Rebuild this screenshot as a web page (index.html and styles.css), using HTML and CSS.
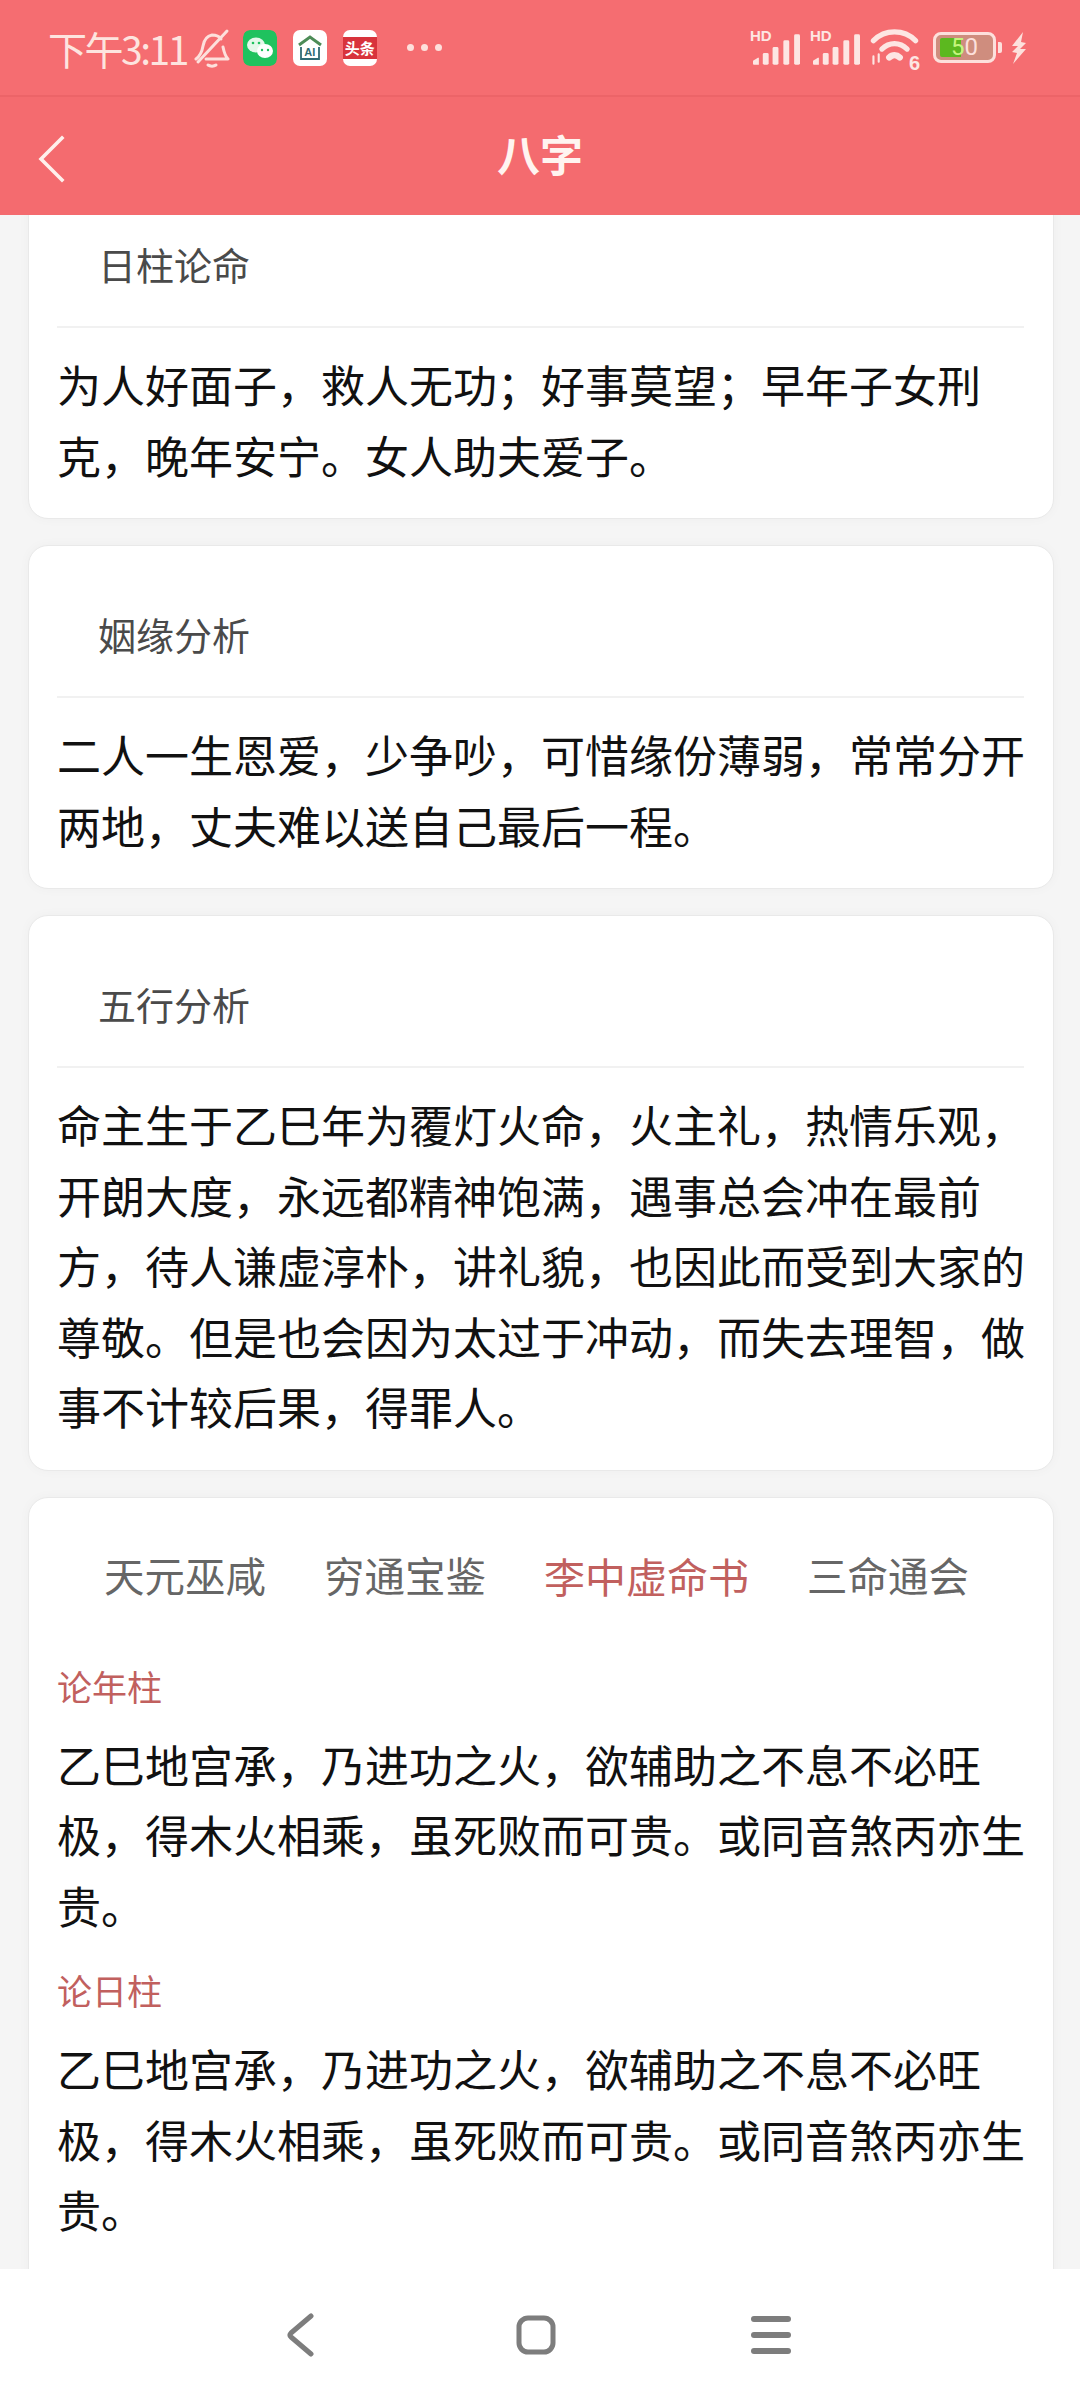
FILE: index.html
```html
<!DOCTYPE html>
<html lang="zh-CN">
<head>
    <meta charset="UTF-8">
    <meta name="viewport" content="width=device-width, initial-scale=1.0">
    <title>八字</title>
    <link rel="stylesheet" href="styles.css">
</head>
<body>
<div class="phone">
    <div class="status-bar">
        <div class="status-left">
            <span class="clock">下午3:11</span>
            <svg class="bell" viewBox="0 0 36 40" fill="none" stroke="#fde0dc" stroke-width="3" stroke-linecap="round" stroke-linejoin="round">
                <path d="M2 31c4-3 6-7 7-13 1-6 4-10 9-11 4 0 7 1 9 4"/>
                <path d="M29 19c1 5 2 9 5 12H12"/>
                <path d="M4 34 33 3"/>
                <path d="M14 37c2 1.500 6 1.500 8 0"/>
            </svg>
            <svg class="app-icon wechat" viewBox="0 0 34 36">
                <rect width="34" height="36" rx="7" fill="#1fc25e"/>
                <ellipse cx="13" cy="15" rx="9" ry="7.500" fill="#e4f8ea"/>
                <ellipse cx="22" cy="21" rx="8" ry="7" fill="#fff"/>
                <circle cx="10" cy="13" r="1.300" fill="#1fc25e"/>
                <circle cx="16" cy="13" r="1.300" fill="#1fc25e"/>
                <circle cx="19" cy="20" r="1.200" fill="#1fc25e"/>
                <circle cx="25" cy="20" r="1.200" fill="#1fc25e"/>
            </svg>
            <span class="app-icon home-ai">
                <svg viewBox="0 0 34 36" fill="none">
                    <path d="M6 15 17 7l11 8" stroke="#4d8c57" stroke-width="3"/>
                    <path d="M8 17v12h18V17" stroke="#2f6a73" stroke-width="1.800"/>
                </svg>
                <span class="home-ai-text">AI</span>
            </span>
            <span class="app-icon toutiao"><span class="toutiao-band">头条</span></span>
            <span class="more-dots"><i></i><i></i><i></i></span>
        </div>
        <div class="status-right">
            <span class="signal">
                <span class="hd">HD</span>
                <svg viewBox="0 0 48 31" fill="#fde6e3"><path d="M0 27l5-3h1v7H1q-1 0-1-1z"/><rect x="10" y="19" width="6" height="12" rx="1.500"/><rect x="20" y="13" width="6" height="18" rx="1.500"/><rect x="31" y="6" width="6" height="25" rx="1.500"/><rect x="42" y="0" width="6" height="31" rx="1.500"/></svg>
            </span>
            <span class="signal">
                <span class="hd">HD</span>
                <svg viewBox="0 0 48 31" fill="#fde6e3"><path d="M0 27l5-3h1v7H1q-1 0-1-1z"/><rect x="10" y="19" width="6" height="12" rx="1.500"/><rect x="20" y="13" width="6" height="18" rx="1.500"/><rect x="31" y="6" width="6" height="25" rx="1.500"/><rect x="42" y="0" width="6" height="31" rx="1.500"/></svg>
            </span>
            <span class="wifi">
                <svg viewBox="0 0 46 38" fill="none" stroke="#fde6e3" stroke-width="5" stroke-linecap="round">
                    <path d="M3 12C14 1 32 1 43 12"/>
                    <path d="M11 20c7-7 17-7 24 0"/>
                    <path d="M18 28c3-3 7-3 10 0" stroke-width="6"/>
                    <path d="M3 27v7M8 25v7" stroke-width="2"/>
                </svg>
                <span class="wifi-six">6</span>
            </span>
            <span class="battery">
                <span class="battery-fill"></span>
                <span class="battery-text"><b>5</b>0</span>
            </span>
            <span class="battery-cap"></span>
            <svg class="bolt" viewBox="0 0 18 32" fill="#fde0dc"><path d="M13 0 2 14h6l-6 6 5 1-4 11 13-15h-6l6-6-5-1z"/></svg>
        </div>
    </div>

    <div class="nav-bar">
        <svg class="nav-back" viewBox="0 0 28 48" fill="none" stroke="#fff0ec" stroke-width="3.600" stroke-linecap="square"><path d="M25 3 4 24l21 21"/></svg>
        <h1 class="nav-title">八字</h1>
    </div>

    <div class="content">
        <div class="content-inner">
            <section class="card">
                <h2 class="card-title">日柱论命</h2>
                <p class="card-text">为人好面子，救人无功；好事莫望；早年子女刑克，晚年安宁。女人助夫爱子。</p>
            </section>

            <section class="card">
                <h2 class="card-title">姻缘分析</h2>
                <p class="card-text">二人一生恩爱，少争吵，可惜缘份薄弱，常常分开两地，丈夫难以送自己最后一程。</p>
            </section>

            <section class="card">
                <h2 class="card-title">五行分析</h2>
                <p class="card-text">命主生于乙巳年为覆灯火命，火主礼，热情乐观，开朗大度，永远都精神饱满，遇事总会冲在最前方，待人谦虚淳朴，讲礼貌，也因此而受到大家的尊敬。但是也会因为太过于冲动，而失去理智，做事不计较后果，得罪人。</p>
            </section>

            <section class="card card-books">
                <div class="tabs">
                    <span class="tab">天元巫咸</span>
                    <span class="tab">穷通宝鉴</span>
                    <span class="tab active">李中虚命书</span>
                    <span class="tab">三命通会</span>
                </div>
                <h3 class="book-head">论年柱</h3>
                <p class="book-text">乙巳地宫承，乃进功之火，欲辅助之不息不必旺极，得木火相乘，虽死败而可贵。或同音煞丙亦生贵。</p>
                <h3 class="book-head">论日柱</h3>
                <p class="book-text">乙巳地宫承，乃进功之火，欲辅助之不息不必旺极，得木火相乘，虽死败而可贵。或同音煞丙亦生贵。</p>
            </section>
        </div>
    </div>

    <div class="bottom-bar">
        <svg class="sys-back" viewBox="0 0 28 44" fill="none" stroke="#7d7d7d" stroke-width="5" stroke-linecap="round" stroke-linejoin="round"><path d="M25 3 5 20q-2 2 0 4l20 17"/></svg>
        <svg class="sys-home" viewBox="0 0 40 40" fill="none" stroke="#7d7d7d" stroke-width="5"><rect x="3" y="3" width="34" height="34" rx="9"/></svg>
        <svg class="sys-menu" viewBox="0 0 40 38" fill="#7d7d7d"><rect y="0" width="40" height="6" rx="3"/><rect y="16" width="40" height="6" rx="3"/><rect y="32" width="40" height="6" rx="3"/></svg>
    </div>
</div>
</body>
</html>
```

FILE: styles.css
```css
* {
    box-sizing: border-box;
}

body {
    margin: 0;
    background-color: #f5f5f5;
    font-family: "Noto Sans CJK SC", "Noto Sans", sans-serif;
}

.phone {
    width: 1080px;
    height: 2400px;
    display: flex;
    flex-direction: column;
    overflow: hidden;
}

/* status bar */
.status-bar {
    height: 97px;
    flex: none;
    display: flex;
    align-items: center;
    justify-content: space-between;
    padding: 0 52px 0 48px;
    background-color: #f56d71;
    border-bottom: 2px solid #ec6468;
}

.status-left,
.status-right {
    display: flex;
    align-items: center;
}

.clock {
    font-family: "Noto Sans CJK SC", Roboto, sans-serif;
    font-size: 39px;
    color: #fde4df;
    letter-spacing: -2.500px;
    margin-right: 7px;
}

.bell {
    width: 36px;
    height: 40px;
    margin-right: 13px;
}

.app-icon {
    width: 34px;
    height: 36px;
    margin-right: 16px;
    flex: none;
    display: block;
    border-radius: 7px;
    overflow: hidden;
}

.home-ai {
    position: relative;
    background-color: #fff;
}

.home-ai svg {
    width: 34px;
    height: 36px;
    display: block;
}

.home-ai-text {
    position: absolute;
    left: 0;
    right: 0;
    top: 15px;
    text-align: center;
    font: bold 11px/14px "Liberation Sans", sans-serif;
    color: #2f6a73;
}

.toutiao {
    background-color: #fff;
    padding-top: 7px;
}

.toutiao-band {
    display: block;
    height: 22px;
    background-color: #d8333c;
    color: #fff;
    font-size: 15px;
    font-weight: 700;
    line-height: 21px;
    text-align: center;
}

.more-dots {
    display: flex;
    gap: 7px;
    margin-left: 14px;
}

.more-dots i {
    width: 7px;
    height: 7px;
    border-radius: 50%;
    background-color: #fde0dc;
}

.signal {
    position: relative;
    width: 50px;
    height: 34px;
    margin-right: 10px;
}

.signal svg {
    position: absolute;
    right: 0;
    bottom: 0;
    width: 47px;
    height: 31px;
}

.hd {
    position: absolute;
    left: 0;
    top: -3px;
    font: bold 15px/15px "Liberation Sans", sans-serif;
    color: #fde6e3;
}

.wifi {
    position: relative;
    width: 49px;
    height: 40px;
    margin-right: 14px;
}

.wifi svg {
    width: 49px;
    height: 40px;
    display: block;
}

.wifi-six {
    position: absolute;
    right: -2px;
    bottom: -5px;
    padding: 0 1px;
    border-radius: 50%;
    background-color: #f56d71;
    font: bold 20px/20px "Liberation Sans", sans-serif;
    color: #fde6e3;
}

.battery {
    position: relative;
    width: 63px;
    height: 31px;
    border: 3px solid #fde0dc;
    border-radius: 8px;
    overflow: hidden;
    background-color: #cf8d7e;
}

.battery-fill {
    position: absolute;
    left: 4px;
    top: 3px;
    bottom: 3px;
    width: 21px;
    border-radius: 2px 0 0 2px;
    background-color: #5cb81f;
}

.battery-text {
    position: absolute;
    left: 15px;
    top: 0;
    font: 24px/25px Roboto, sans-serif;
    color: #fde0dc;
}

.battery-text b {
    font-weight: 400;
    color: #c6f57e;
}

.battery-cap {
    width: 4px;
    height: 11px;
    margin: 0 8px 0 2px;
    background-color: #fde0dc;
    border-radius: 0 2px 2px 0;
}

.bolt {
    width: 18px;
    height: 32px;
}

/* nav bar */
.nav-bar {
    position: relative;
    height: 118px;
    flex: none;
    display: flex;
    align-items: center;
    justify-content: center;
    background-color: #f46b6f;
}

.nav-back {
    position: absolute;
    left: 37px;
    top: 38px;
    width: 28px;
    height: 48px;
}

.nav-title {
    margin: 0 0 6px;
    font-size: 43px;
    font-weight: 700;
    color: #fff4f0;
}

/* page content */
.content {
    flex: 1;
    min-height: 0;
    overflow: hidden;
}

/* the list is scrolled a little, the first card goes under the nav bar */
.content-inner {
    margin-top: -40px;
    padding: 0 26px 0 28px;
    display: flex;
    flex-direction: column;
    gap: 26px;
}

.card {
    padding: 0 25px 28px 28px;
    background-color: #fff;
    border: 1px solid #e9e9e9;
    border-radius: 20px;
    box-shadow: 0 0 12px rgba(0, 0, 0, 0.03);
}

.card-title {
    margin: 0 4px 0 0;
    height: 152px;
    padding: 57px 0 0 41px;
    font-size: 38px;
    font-weight: 400;
    line-height: 62px;
    color: #4a4a4a;
    border-bottom: 2px solid #f1f1f1;
}

.card-text,
.book-text {
    margin: 0;
    font-size: 44px;
    line-height: 70.500px;
    color: #111;
}

.card-text {
    padding-top: 21px;
}

.card-books {
    padding-top: 47px;
    padding-bottom: 60px;
}

.tabs {
    display: flex;
    gap: 58px;
    padding-left: 47px;
    margin-bottom: 51px;
}

.tab {
    font-size: 40.500px;
    line-height: 60px;
    color: #666;
}

.tab.active {
    font-size: 41px;
    color: #c1605e;
}

.book-head {
    margin: 20px 0 13px;
    font-size: 35px;
    font-weight: 400;
    line-height: 60px;
    color: #c1605e;
}

/* system bar */
.bottom-bar {
    height: 131px;
    flex: none;
    position: relative;
    z-index: 1;
    display: flex;
    align-items: center;
    background-color: #fff;
    padding: 0 0 0 286px;
}

.sys-back {
    width: 28px;
    height: 44px;
}

.sys-home {
    width: 40px;
    height: 40px;
    margin-left: 202px;
}

.sys-menu {
    width: 40px;
    height: 38px;
    margin-left: 195px;
}
```
